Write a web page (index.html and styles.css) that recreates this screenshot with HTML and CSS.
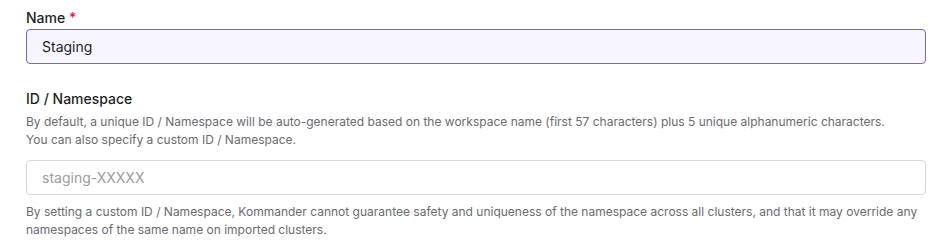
FILE: index.html
```html
<!DOCTYPE html>
<html lang="en">
<head>
    <meta charset="UTF-8">
    <meta name="viewport" content="width=device-width, initial-scale=1.0">
    <title>Workspace Form</title>
    <link rel="stylesheet" href="styles.css">
</head>
<body>
    <form class="workspace-form">
        <div class="field">
            <label for="name" class="field-label">Name <span class="required">*</span></label>
            <input type="text" id="name" name="name" class="field-input active" value="Staging">
        </div>

        <div class="field">
            <label for="namespace" class="field-label">ID / Namespace</label>
            <p class="field-desc">By default, a unique ID / Namespace will be auto-generated based on the workspace name (first 57 characters) plus 5 unique alphanumeric characters.<br>You can also specify a custom ID / Namespace.</p>
            <input type="text" id="namespace" name="namespace" class="field-input" placeholder="staging-XXXXX">
            <p class="field-help">By setting a custom ID / Namespace, Kommander cannot guarantee safety and uniqueness of the namespace across all clusters, and that it may override any namespaces of the same name on imported clusters.</p>
        </div>
    </form>
</body>
</html>
```

FILE: styles.css
```css
body {
    margin: 0;
    background: #ffffff;
    font-family: Inter, "Noto Sans", sans-serif;
    color: #1f1f24;
}

.workspace-form {
    padding: 8px 24px 0 26px;
}

.field {
    display: flex;
    flex-direction: column;
}

.field + .field {
    margin-top: 25px;
}

.field-label {
    font-size: 14px;
    font-weight: 500;
    line-height: 20px;
    margin-bottom: 1px;
}

.required {
    color: #e5173f;
}

.field-input {
    box-sizing: border-box;
    height: 35px;
    padding: 0 15px;
    border: 1px solid #d8d8dc;
    border-radius: 4px;
    font-family: inherit;
    font-size: 14px;
    color: #1f1f24;
    background: #ffffff;
    outline: none;
}

.field-input.active {
    border-color: #7b5cf5;
    background: #f7f5ff;
}

.field-input::placeholder {
    color: #9c9ca3;
}

.field-desc,
.field-help {
    margin: 0;
    font-size: 12px;
    line-height: 18px;
    color: #6b6b72;
}

.field-desc {
    margin: 3px 0 11px;
}

.field-help {
    margin-top: 8px;
}
```
